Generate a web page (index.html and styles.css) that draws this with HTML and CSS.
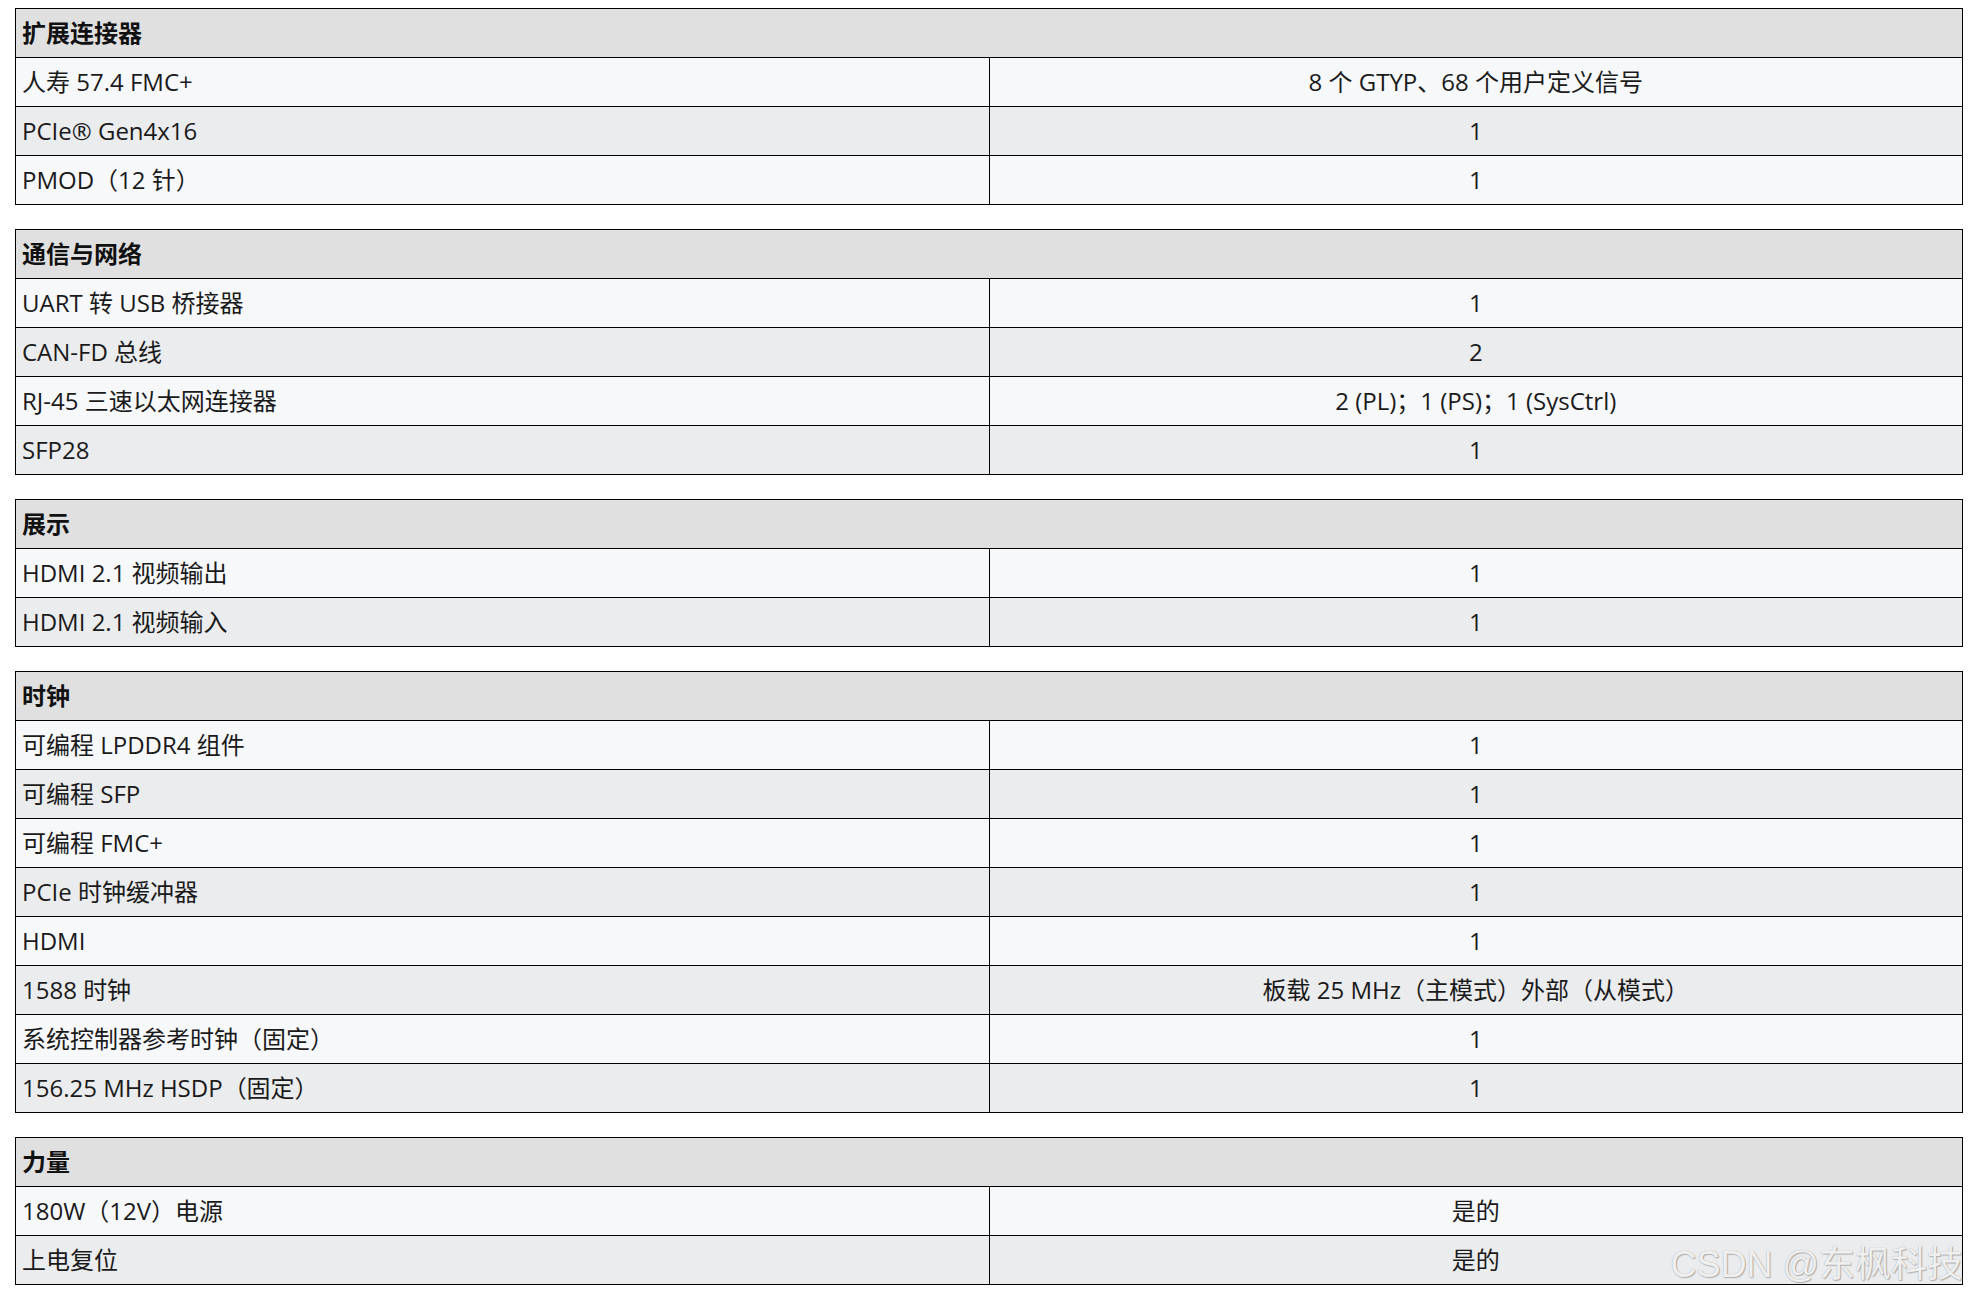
FILE: index.html
```html
<!DOCTYPE html>
<html lang="zh-CN">
<head>
<meta charset="utf-8">
<title>规格</title>
<link rel="stylesheet" href="styles.css">
</head>
<body>
<div class="page">
  <table class="spec">
    <tr class="head"><th colspan="2">扩展连接器</th></tr>
    <tr><td>人寿 57.4 FMC+</td><td class="val">8 个 GTYP、68 个用户定义信号</td></tr>
    <tr><td>PCIe® Gen4x16</td><td class="val">1</td></tr>
    <tr><td>PMOD（12 针）</td><td class="val">1</td></tr>
  </table>
  <table class="spec">
    <tr class="head"><th colspan="2">通信与网络</th></tr>
    <tr><td>UART 转 USB 桥接器</td><td class="val">1</td></tr>
    <tr><td>CAN-FD 总线</td><td class="val">2</td></tr>
    <tr><td>RJ-45 三速以太网连接器</td><td class="val">2 (PL)；1 (PS)；1 (SysCtrl)</td></tr>
    <tr><td>SFP28</td><td class="val">1</td></tr>
  </table>
  <table class="spec">
    <tr class="head"><th colspan="2">展示</th></tr>
    <tr><td>HDMI 2.1 视频输出</td><td class="val">1</td></tr>
    <tr><td>HDMI 2.1 视频输入</td><td class="val">1</td></tr>
  </table>
  <table class="spec">
    <tr class="head"><th colspan="2">时钟</th></tr>
    <tr><td>可编程 LPDDR4 组件</td><td class="val">1</td></tr>
    <tr><td>可编程 SFP</td><td class="val">1</td></tr>
    <tr><td>可编程 FMC+</td><td class="val">1</td></tr>
    <tr><td>PCIe 时钟缓冲器</td><td class="val">1</td></tr>
    <tr><td>HDMI</td><td class="val">1</td></tr>
    <tr><td>1588 时钟</td><td class="val">板载 25 MHz（主模式）外部（从模式）</td></tr>
    <tr><td>系统控制器参考时钟（固定）</td><td class="val">1</td></tr>
    <tr><td>156.25 MHz HSDP（固定）</td><td class="val">1</td></tr>
  </table>
  <table class="spec">
    <tr class="head"><th colspan="2">力量</th></tr>
    <tr><td>180W（12V）电源</td><td class="val">是的</td></tr>
    <tr><td>上电复位</td><td class="val">是的</td></tr>
  </table>
  <div class="watermark">CSDN @东枫科技</div>
</div>
</body>
</html>
```
FILE: styles.css
```css
html, body {
  margin: 0;
  padding: 0;
  background: #ffffff;
}
body {
  font-family: "Open Sans", "Noto Sans CJK SC", sans-serif;
  color: #1a1a1a;
}
.page {
  position: relative;
  display: flex;
  flex-direction: column;
  gap: 24px;
  padding: 8px 10px 0 15px;
  height: 1290px;
  box-sizing: border-box;
}
.spec {
  width: 100%;
  border-collapse: collapse;
  table-layout: fixed;
  font-size: 24px;
  line-height: 28px;
}
.spec th,
.spec td {
  border: 1px solid #000;
  padding: 10px 6px;
  text-align: left;
}
.spec th {
  font-weight: 700;
  background: #e0e0e0;
  color: #111;
}
.spec tr:nth-child(even) td {
  background: #f7f8fa;
}
.spec tr:nth-child(odd) td {
  background: #ebecee;
}
.spec td.val {
  text-align: center;
}
.watermark {
  position: absolute;
  right: 10px;
  bottom: 2px;
  font-family: "Liberation Sans", "Noto Sans CJK SC", sans-serif;
  font-size: 36px;
  line-height: 46px;
  color: rgba(255, 255, 255, 0.85);
  text-shadow: 0 0 1px #9a9a9a, 1px 1px 1px #b0b0b0;
  white-space: nowrap;
}
```
